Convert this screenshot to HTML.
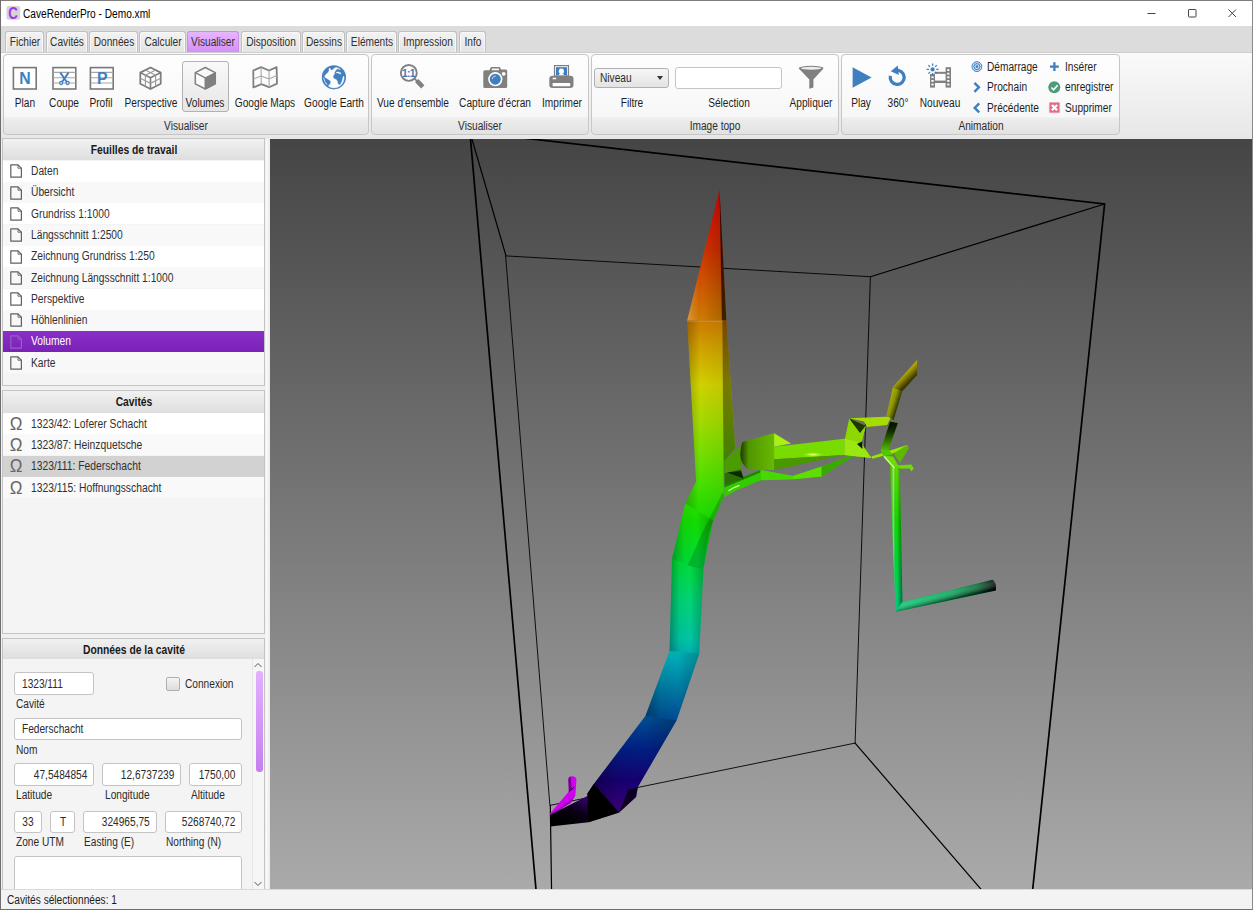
<!DOCTYPE html>
<html lang="fr">
<head>
<meta charset="utf-8">
<title>CaveRenderPro - Demo.xml</title>
<style>
*{box-sizing:border-box;margin:0;padding:0}
html,body{width:1253px;height:910px;overflow:hidden}
body{position:relative;background:#f0f0f0;font-family:"Liberation Sans","DejaVu Sans",sans-serif;font-size:12px;color:#2b2b2b}
.abs{position:absolute}
.t{position:absolute;white-space:nowrap;line-height:14px;height:14px;transform:scaleX(0.845);transform-origin:0 50%}
.t.ct{transform:translateX(-50%) scaleX(0.845);transform-origin:50% 50%}
.t.rt{transform-origin:100% 50%}
#title{left:0;top:0;width:1253px;height:26px;background:#fff;border-top:1px solid #7d7d7d}
#tabbar{left:0;top:26px;width:1253px;height:27px;background:#dcdcdc;border-bottom:1px solid #cecece}
.tab{position:absolute;top:31px;height:21px;border:1px solid #c0c0c0;border-bottom:none;border-radius:3px 3px 0 0;background:linear-gradient(#f3f3f3,#e4e4e4);box-shadow:inset 1px 1px 0 #f8f8f8,inset -1px 0 0 #f8f8f8}
.tab.sel{background:linear-gradient(#e6b6ff,#d490f6);border-color:#c690e4;box-shadow:none}
#ribbon{left:0;top:53px;width:1253px;height:86px;background:linear-gradient(#fafafa,#e7e7e7)}
.grp{position:absolute;top:54px;height:81px;border:1px solid #c6c6c6;border-radius:4px;background:linear-gradient(#fefefe 0,#f7f7f7 62px,#ededed 63px,#e2e2e2 100%)}
.panel{position:absolute;left:2px;width:263px;border:1px solid #c4c4c4;background:#f4f4f4;overflow:hidden}
.phead{position:absolute;left:0;right:0;top:0;height:20px;background:linear-gradient(#f1f1f1,#dedede)}
.row{position:absolute;left:0;width:261px;height:21px}
.inp{position:absolute;border:1px solid #c4c4c4;border-radius:3px;background:#fff}
#view{left:270px;top:139px;width:983px;height:750px;background:linear-gradient(#454545,#aaaaaa);overflow:hidden}
#status{left:0;top:889px;width:1253px;height:21px;background:#f3f3f3;border-top:1px solid #dadada}
#wb{left:0;top:0;width:1253px;height:910px;border-left:1px solid #6e6e6e;border-right:1px solid #8a8a8a;border-bottom:1px solid #6e6e6e;pointer-events:none}
</style>
</head>
<body>
<div id="title" class="abs"></div>
<svg class="abs" style="left:6px;top:6px" width="15" height="14" viewBox="0 0 15 14"><rect x=".5" y="0" width="13.700" height="13.800" rx="2" fill="#d4d4d4"/><text x="7" y="13" text-anchor="middle" font-family="Liberation Sans,sans-serif" font-size="16.500" font-weight="bold" fill="#a333f0" transform="translate(7 0) scale(.8 1) translate(-7 0)">C</text></svg>
<div class="t" style="left:23px;top:7px;color:#000;">CaveRenderPro - Demo.xml</div>
<svg class="abs" style="left:1140px;top:0" width="113" height="26" viewBox="0 0 113 26" fill="none" stroke="#444" stroke-width="1"><path d="M7.500 13.500h8"/><rect x="48.500" y="9.500" width="7.500" height="7.500" rx=".6"/><path d="M88.500 9.500l7.500 7.500M96 9.500l-7.500 7.500"/></svg>
<div id="tabbar" class="abs"></div>
<div class="tab" style="left:5px;width:39px"></div>
<div class="t ct" style="left:24.5px;top:35px;color:#303030;">Fichier</div>
<div class="tab" style="left:46px;width:42px"></div>
<div class="t ct" style="left:67.0px;top:35px;color:#303030;">Cavités</div>
<div class="tab" style="left:89px;width:49px"></div>
<div class="t ct" style="left:113.5px;top:35px;color:#303030;">Données</div>
<div class="tab" style="left:139px;width:47px"></div>
<div class="t ct" style="left:162.5px;top:35px;color:#303030;">Calculer</div>
<div class="tab sel" style="left:187px;width:52px"></div>
<div class="t ct" style="left:213.0px;top:35px;color:#303030;">Visualiser</div>
<div class="tab" style="left:241px;width:60px"></div>
<div class="t ct" style="left:271.0px;top:35px;color:#303030;">Disposition</div>
<div class="tab" style="left:302px;width:43px"></div>
<div class="t ct" style="left:323.5px;top:35px;color:#303030;">Dessins</div>
<div class="tab" style="left:346px;width:51px"></div>
<div class="t ct" style="left:371.5px;top:35px;color:#303030;">Eléments</div>
<div class="tab" style="left:398px;width:59px"></div>
<div class="t ct" style="left:427.5px;top:35px;color:#303030;">Impression</div>
<div class="tab" style="left:459px;width:27px"></div>
<div class="t ct" style="left:472.5px;top:35px;color:#303030;">Info</div>
<div id="ribbon" class="abs"></div>
<div class="grp" style="left:3px;width:366px"></div>
<div class="t ct" style="left:186.0px;top:119px;">Visualiser</div>
<div class="grp" style="left:371px;width:218px"></div>
<div class="t ct" style="left:480.0px;top:119px;">Visualiser</div>
<div class="grp" style="left:591px;width:248px"></div>
<div class="t ct" style="left:715.0px;top:119px;">Image topo</div>
<div class="grp" style="left:841px;width:279px"></div>
<div class="t ct" style="left:980.5px;top:119px;">Animation</div>
<div class="abs" style="left:182px;top:61px;width:47px;height:51px;border:1px solid #b2b2b2;border-radius:3px;background:linear-gradient(#f9f9f9,#e6e6e6)"></div>
<div class="t ct" style="left:24.5px;top:96px;color:#1e1e1e;">Plan</div>
<div class="t ct" style="left:64px;top:96px;color:#1e1e1e;">Coupe</div>
<div class="t ct" style="left:101px;top:96px;color:#1e1e1e;">Profil</div>
<div class="t ct" style="left:150.5px;top:96px;color:#1e1e1e;">Perspective</div>
<div class="t ct" style="left:205px;top:96px;color:#1e1e1e;">Volumes</div>
<div class="t ct" style="left:264.5px;top:96px;color:#1e1e1e;">Google Maps</div>
<div class="t ct" style="left:333.5px;top:96px;color:#1e1e1e;">Google Earth</div>
<div class="t ct" style="left:413px;top:96px;color:#1e1e1e;">Vue d'ensemble</div>
<div class="t ct" style="left:495px;top:96px;color:#1e1e1e;">Capture d'écran</div>
<div class="t ct" style="left:561.5px;top:96px;color:#1e1e1e;">Imprimer</div>
<div class="t ct" style="left:632px;top:96px;color:#1e1e1e;">Filtre</div>
<div class="t ct" style="left:728.5px;top:96px;color:#1e1e1e;">Sélection</div>
<div class="t ct" style="left:811px;top:96px;color:#1e1e1e;">Appliquer</div>
<div class="t ct" style="left:861px;top:96px;color:#1e1e1e;">Play</div>
<div class="t ct" style="left:897.5px;top:96px;color:#1e1e1e;">360°</div>
<div class="t ct" style="left:940px;top:96px;color:#1e1e1e;">Nouveau</div>
<svg class="abs" style="left:0;top:55px" width="1253" height="80" viewBox="0 55 1253 80">
<g font-family="Liberation Sans,sans-serif" font-weight="bold">
<!-- Plan -->
<rect x="13.400" y="67.600" width="22.800" height="21.400" fill="#fff" stroke="#787878" stroke-width="1.600"/>
<text x="24.900" y="84.200" font-size="15.800" text-anchor="middle" fill="#3f7fbf">N</text>
<!-- Coupe -->
<rect x="53" y="67.600" width="22.800" height="21.400" fill="#fff" stroke="#787878" stroke-width="1.600"/>
<path d="M53.500 72.400h22M53.500 77.700h22M53.500 83h22" stroke="#a6a6a6" stroke-width="1.100" fill="none"/>
<g fill="none" stroke="#3f7fbf">
<path d="M60.300 72.600L66.800 82M68.500 72.600L62 82" stroke-width="1.900"/>
<circle cx="61.200" cy="83" r="1.600" stroke-width="1.100"/><circle cx="67.600" cy="83" r="1.600" stroke-width="1.100"/>
</g>
<!-- Profil -->
<rect x="90.400" y="67.600" width="22.800" height="21.400" fill="#fff" stroke="#787878" stroke-width="1.600"/>
<path d="M91 72.400h22M91 77.700h22M91 83h22" stroke="#a6a6a6" stroke-width="1.100" fill="none"/>
<text x="102.300" y="84.200" font-size="15.800" text-anchor="middle" fill="#3f7fbf">P</text>
</g>
<!-- Perspective cube -->
<g fill="none" stroke-linejoin="round">
<path d="M150.500 67.500L160.700 72.600V83.800L150.500 89L140.300 83.800V72.600Z" fill="#fff" stroke="#7c7c7c" stroke-width="1.800"/>
<path d="M140.300 72.600L150.500 77.800L160.700 72.600M150.500 77.800V89" stroke="#7c7c7c" stroke-width="1.600"/>
<path d="M145.400 70L155.600 75.200V86.400M155.600 70L145.400 75.200V86.400M140.300 78.200L150.500 83.400L160.700 78.200" stroke="#9c9c9c" stroke-width="1.200"/>
</g>
<!-- Volumes cube -->
<g fill="none" stroke-linejoin="round">
<path d="M205.300 67.500L215.300 72.600V83.800L205.300 89L195.300 83.800V72.600Z" fill="#fafafa" stroke="#808080" stroke-width="1.500"/>
<path d="M205.300 77.800L215.300 72.600V83.800L205.300 89Z" fill="#808080" stroke="#808080" stroke-width="1"/>
<path d="M195.300 72.600L205.300 77.800V89" stroke="#808080" stroke-width="1.300"/>
</g>
<!-- Google Maps -->
<g fill="none" stroke-linejoin="round">
<path d="M253.300 70.500L261 67.200L269 70.500L276.600 67.200L277 83.600L269.200 87.200L261.300 84.200L253.400 87.400Z" fill="#fcfcfc" stroke="#808080" stroke-width="1.800"/>
<path d="M261 67.200L261.300 84.200M269 70.500L269.200 87.200M253.400 79L261.200 76L269.100 79L276.800 75.600" stroke="#a8a8a8" stroke-width="1.100"/>
</g>
<!-- Google Earth -->
<circle cx="333.900" cy="77.300" r="12.100" fill="#4280bf"/>
<g fill="#fdfdfd" stroke="#fdfdfd" stroke-width=".4" stroke-linejoin="round"><path d="M329.8 68.0 L330.9 70.1 L332.4 70.1 L334.7 68.0 L336.2 67.5 L338.4 68.0 L336.9 69.3 L335.4 70.8 L334.3 72.7 L334.7 73.8 L333.6 74.9 L333.0 76.8 L333.9 78.7 L336.2 79.4 L337.3 81.3 L338.0 83.9 L339.2 85.0 L340.6 84.3 L342.1 80.9 L342.9 77.6 L343.6 76.1 L344.2 77.6 L343.6 80.9 L342.1 83.9 L339.9 86.1 L336.9 87.6 L333.9 88.0 L330.9 87.4 L328.3 86.1 L330.2 83.9 L330.9 81.7 L329.8 80.2 L327.2 78.7 L325.0 77.2 L324.6 76.1 L326.1 74.2 L328.3 72.3 L329.1 70.8 L328.9 69.0Z"/><path d="M323.5 77.6 L324.6 80.9 L326.1 83.9 L327.2 84.6 L325.3 82.4 L324.0 79.4Z"/><path d="M336.2 72.3 L338.4 71.9 L341.0 73.1 L340.6 74.0 L338.0 73.1 L336.4 72.9Z"/><path d="M338.4 68.5 L340.3 69.1 L339.9 69.6 L338.2 69.0Z"/></g>
<!-- Vue d'ensemble magnifier -->
<path d="M414 78.200L417.500 81.600" stroke="#808080" stroke-width="1.800"/>
<path d="M416.700 80.700L422.800 86.900" stroke="#808080" stroke-width="4.600" stroke-linecap="butt"/>
<circle cx="408.800" cy="72.900" r="7.950" fill="#fff" stroke="#808080" stroke-width="1.900"/>
<text x="408.500" y="76.600" font-family="Liberation Sans,sans-serif" font-weight="bold" font-size="10.300" text-anchor="middle" fill="#3c78b8" letter-spacing="-.7">1:1</text>
<!-- Capture d'écran camera -->
<path d="M484.800 70.200h4.600l1-2.200a1.500 1.500 0 0 1 1.300-.9h7.400a1.500 1.500 0 0 1 1.300.9l.6 1.500h4.600a1.600 1.600 0 0 1 1.600 1.600v15.300a1.500 1.500 0 0 1-1.500 1.500h-20.900a1.500 1.500 0 0 1-1.500-1.500v-14.700a1.500 1.500 0 0 1 1.500-1.500z" fill="#808080"/>
<rect x="491.800" y="68.400" width="7.200" height="1.900" rx=".4" fill="#f4f4f4"/>
<circle cx="495.300" cy="79.200" r="7.100" fill="#fff"/>
<circle cx="495.300" cy="79.200" r="5.500" fill="#3f7fbf"/>
<path d="M492.200 78.700A3.500 3.500 0 0 1 495.400 75.900" fill="none" stroke="#c4dcf4" stroke-width="1" stroke-linecap="round"/>
<circle cx="503.700" cy="73.800" r="1.900" fill="#fff"/>
<!-- Imprimer printer -->
<rect x="554.500" y="65.600" width="14" height="10.400" fill="#f4f4f4" stroke="#808080" stroke-width="1.200"/>
<rect x="556" y="67.200" width="11" height="8" fill="#3f7fbf"/>
<circle cx="561.400" cy="71.200" r="2.600" fill="#fff"/><path d="M558.800 75.200c.4-1.600 1.400-2 2.600-2s2.200.4 2.600 2z" fill="#fff"/>
<path d="M552.600 75.800h17.600a3.300 3.300 0 0 1 3.300 3.300v5.600a3.200 3.200 0 0 1-3.200 3.200h-17.800a3.200 3.200 0 0 1-3.200-3.200v-5.600a3.300 3.300 0 0 1 3.300-3.300z" fill="#808080"/>
<rect x="552.600" y="82.900" width="17.600" height="3.400" rx=".5" fill="#fff"/>
<rect x="552.600" y="77.700" width="3.600" height="1.500" rx=".4" fill="#fff"/>
<!-- Appliquer funnel -->
<path d="M798.800 68.500L809.300 79.600V88.800L813.400 87.400V79.600L823.400 68.500Z" fill="#808080"/>
<ellipse cx="811.100" cy="68.300" rx="12.300" ry="2.500" fill="#808080"/>
<ellipse cx="811.100" cy="68.200" rx="10.300" ry="1.500" fill="#ececec"/>
<!-- Play -->
<path d="M852.600 67.200L871.600 77.400L852.600 87.800Z" fill="#3f7fbf"/>
<!-- 360 -->
<path d="M895.600 70.600A7 7 0 1 1 890.400 75.800" fill="none" stroke="#3f7fbf" stroke-width="3.300"/>
<path d="M897.800 65.400L890.800 71.200L898.800 75Z" fill="#3f7fbf"/>
<!-- Nouveau film -->
<g fill="#808080">
<rect x="930" y="74" width="5" height="13.600"/><rect x="945.600" y="67.200" width="5.400" height="20.400"/>
<rect x="934.500" y="71.800" width="11.500" height="2"/>
<rect x="934.500" y="80.600" width="11.500" height="2.400"/>
</g>
<g fill="#fff"><rect x="931.400" y="76.400" width="2.200" height="1.800"/><rect x="931.400" y="80" width="2.200" height="1.800"/><rect x="931.400" y="83.600" width="2.200" height="1.800"/><rect x="947.200" y="69.200" width="2.200" height="1.800"/><rect x="947.200" y="72.800" width="2.200" height="1.800"/><rect x="947.200" y="76.400" width="2.200" height="1.800"/><rect x="947.200" y="80" width="2.200" height="1.800"/><rect x="947.200" y="83.600" width="2.200" height="1.800"/></g>
<g stroke="#3f7fbf" stroke-width="1.300" fill="none" stroke-dasharray="2.400 1.800 0 0"><path d="M932.600 63.400v4.200M932.600 75.400v-4.200M926.600 69.400h4.200M938.600 69.400h-4.200M928.400 65.200l3 3M936.800 73.600l-3-3M936.800 65.200l-3 3M928.400 73.600l3-3"/></g>
<circle cx="932.600" cy="69.400" r="2.100" fill="#3f7fbf"/>
<!-- small icons col 1 -->
<g fill="none" stroke="#3f7fbf">
<circle cx="976.900" cy="66.600" r="4.900" stroke-width="1" fill="#cfe0f2"/><circle cx="976.900" cy="66.600" r="3" stroke-width="1"/><circle cx="976.900" cy="66.600" r="1.400" fill="#3f7fbf" stroke="none"/>
<path d="M974.400 82.800L978.900 87.300L974.400 91.800" stroke-width="2.400"/>
<path d="M979.200 103.400L974.700 107.900L979.200 112.400" stroke-width="2.400"/>
<path d="M1054.400 62.300v8.800M1050 66.700h8.800" stroke-width="2.300"/>
</g>
<circle cx="1054.300" cy="87.300" r="6" fill="#4c9c7c"/>
<path d="M1051.400 87.500L1053.600 89.800L1057.600 85.200" fill="none" stroke="#fff" stroke-width="1.600"/>
<rect x="1049.400" y="102.500" width="10.200" height="10.200" rx="1" fill="#e06a88" stroke="#eaa0b4" stroke-width=".8"/>
<path d="M1051.900 105L1057.100 110.200M1057.100 105L1051.900 110.200" stroke="#fff" stroke-width="2.300" fill="none"/>
</svg>

<div class="abs" style="left:594px;top:68px;width:75px;height:20px;border:1px solid #b0b0b0;border-radius:3px;background:linear-gradient(#f7f7f7,#e3e3e3)"></div>
<div class="t" style="left:600px;top:71px;">Niveau</div>
<div class="abs" style="left:657px;top:76px;width:0;height:0;border-left:3.5px solid transparent;border-right:3.5px solid transparent;border-top:4px solid #333"></div>
<div class="abs" style="left:675px;top:67px;width:107px;height:22px;border:1px solid #c6c6c6;border-radius:3px;background:#fff"></div>
<div class="t" style="left:987px;top:60px;color:#1e1e1e;">Démarrage</div>
<div class="t" style="left:1065px;top:60px;color:#1e1e1e;">Insérer</div>
<div class="t" style="left:987px;top:80px;color:#1e1e1e;">Prochain</div>
<div class="t" style="left:1065px;top:80px;color:#1e1e1e;">enregistrer</div>
<div class="t" style="left:987px;top:101px;color:#1e1e1e;">Précédente</div>
<div class="t" style="left:1065px;top:101px;color:#1e1e1e;">Supprimer</div>
<div class="panel" style="top:138px;height:248px"><div class="phead" style="height:21px"></div></div>
<div class="t ct" style="left:133.5px;top:143px;color:#1a1a1a;font-weight:bold;transform:translateX(-50%) scaleX(0.86);">Feuilles de travail</div>
<div class="row" style="left:3px;top:160.7px;background:#fff"></div>
<svg class="abs" style="left:10px;top:164.3px" width="12" height="14" viewBox="0 0 12 14" fill="none" stroke="#606060" stroke-width="1.200" stroke-linejoin="round"><path d="M.800 .800h7.200l3.400 3.400v9h-10.600z"/><path d="M8 .800v3.400h3.400" stroke-width=".9"/></svg>
<div class="t" style="left:31px;top:164.0px;color:#303030;transform:scaleX(0.854);">Daten</div>
<div class="row" style="left:3px;top:182.0px;background:#f8f8f8"></div>
<svg class="abs" style="left:10px;top:185.6px" width="12" height="14" viewBox="0 0 12 14" fill="none" stroke="#606060" stroke-width="1.200" stroke-linejoin="round"><path d="M.800 .800h7.200l3.400 3.400v9h-10.600z"/><path d="M8 .800v3.400h3.400" stroke-width=".9"/></svg>
<div class="t" style="left:31px;top:185.3px;color:#303030;transform:scaleX(0.854);">Übersicht</div>
<div class="row" style="left:3px;top:203.3px;background:#fff"></div>
<svg class="abs" style="left:10px;top:206.9px" width="12" height="14" viewBox="0 0 12 14" fill="none" stroke="#606060" stroke-width="1.200" stroke-linejoin="round"><path d="M.800 .800h7.200l3.400 3.400v9h-10.600z"/><path d="M8 .800v3.400h3.400" stroke-width=".9"/></svg>
<div class="t" style="left:31px;top:206.6px;color:#303030;transform:scaleX(0.854);">Grundriss 1:1000</div>
<div class="row" style="left:3px;top:224.6px;background:#f8f8f8"></div>
<svg class="abs" style="left:10px;top:228.2px" width="12" height="14" viewBox="0 0 12 14" fill="none" stroke="#606060" stroke-width="1.200" stroke-linejoin="round"><path d="M.800 .800h7.200l3.400 3.400v9h-10.600z"/><path d="M8 .800v3.400h3.400" stroke-width=".9"/></svg>
<div class="t" style="left:31px;top:227.9px;color:#303030;transform:scaleX(0.854);">Längsschnitt 1:2500</div>
<div class="row" style="left:3px;top:245.9px;background:#fff"></div>
<svg class="abs" style="left:10px;top:249.5px" width="12" height="14" viewBox="0 0 12 14" fill="none" stroke="#606060" stroke-width="1.200" stroke-linejoin="round"><path d="M.800 .800h7.200l3.400 3.400v9h-10.600z"/><path d="M8 .800v3.400h3.400" stroke-width=".9"/></svg>
<div class="t" style="left:31px;top:249.2px;color:#303030;transform:scaleX(0.854);">Zeichnung Grundriss 1:250</div>
<div class="row" style="left:3px;top:267.2px;background:#f8f8f8"></div>
<svg class="abs" style="left:10px;top:270.8px" width="12" height="14" viewBox="0 0 12 14" fill="none" stroke="#606060" stroke-width="1.200" stroke-linejoin="round"><path d="M.800 .800h7.200l3.400 3.400v9h-10.600z"/><path d="M8 .800v3.400h3.400" stroke-width=".9"/></svg>
<div class="t" style="left:31px;top:270.5px;color:#303030;transform:scaleX(0.854);">Zeichnung Längsschnitt 1:1000</div>
<div class="row" style="left:3px;top:288.5px;background:#fff"></div>
<svg class="abs" style="left:10px;top:292.1px" width="12" height="14" viewBox="0 0 12 14" fill="none" stroke="#606060" stroke-width="1.200" stroke-linejoin="round"><path d="M.800 .800h7.200l3.400 3.400v9h-10.600z"/><path d="M8 .800v3.400h3.400" stroke-width=".9"/></svg>
<div class="t" style="left:31px;top:291.8px;color:#303030;transform:scaleX(0.854);">Perspektive</div>
<div class="row" style="left:3px;top:309.8px;background:#f8f8f8"></div>
<svg class="abs" style="left:10px;top:313.4px" width="12" height="14" viewBox="0 0 12 14" fill="none" stroke="#606060" stroke-width="1.200" stroke-linejoin="round"><path d="M.800 .800h7.200l3.400 3.400v9h-10.600z"/><path d="M8 .800v3.400h3.400" stroke-width=".9"/></svg>
<div class="t" style="left:31px;top:313.1px;color:#303030;transform:scaleX(0.854);">Höhlenlinien</div>
<div class="row" style="left:3px;top:331.1px;background:linear-gradient(#8a2fc8,#7a22b8)"></div>
<svg class="abs" style="left:10px;top:334.7px" width="12" height="14" viewBox="0 0 12 14" fill="none" stroke="#9460bc" stroke-width="1.200" stroke-linejoin="round"><path d="M.800 .800h7.200l3.400 3.400v9h-10.600z"/><path d="M8 .800v3.400h3.400" stroke-width=".9"/></svg>
<div class="t" style="left:31px;top:334.4px;color:#fff;transform:scaleX(0.854);">Volumen</div>
<div class="row" style="left:3px;top:352.4px;background:#f8f8f8"></div>
<svg class="abs" style="left:10px;top:356.0px" width="12" height="14" viewBox="0 0 12 14" fill="none" stroke="#606060" stroke-width="1.200" stroke-linejoin="round"><path d="M.800 .800h7.200l3.400 3.400v9h-10.600z"/><path d="M8 .800v3.400h3.400" stroke-width=".9"/></svg>
<div class="t" style="left:31px;top:355.7px;color:#303030;transform:scaleX(0.854);">Karte</div>
<div class="panel" style="top:390px;height:244px"><div class="phead" style="height:22px"></div></div>
<div class="t ct" style="left:133.5px;top:395px;color:#1a1a1a;font-weight:bold;transform:translateX(-50%) scaleX(0.86);">Cavités</div>
<div class="row" style="left:3px;top:413px;background:#fff"></div>
<div class="t ct" style="left:16.400px;top:413.8px;font-size:17.500px;line-height:20px;height:20px;color:#666;transform:translateX(-50%) scaleX(.97)">Ω</div>
<div class="t" style="left:31px;top:416.8px;color:#303030;transform:scaleX(0.86);">1323/42: Loferer Schacht</div>
<div class="row" style="left:3px;top:434.3px;background:#f9f9f9"></div>
<div class="t ct" style="left:16.400px;top:435.1px;font-size:17.500px;line-height:20px;height:20px;color:#666;transform:translateX(-50%) scaleX(.97)">Ω</div>
<div class="t" style="left:31px;top:438.1px;color:#303030;transform:scaleX(0.86);">1323/87: Heinzquetsche</div>
<div class="row" style="left:3px;top:455.6px;background:#d2d2d2"></div>
<div class="t ct" style="left:16.400px;top:456.4px;font-size:17.500px;line-height:20px;height:20px;color:#666;transform:translateX(-50%) scaleX(.97)">Ω</div>
<div class="t" style="left:31px;top:459.40000000000003px;color:#303030;transform:scaleX(0.86);">1323/111: Federschacht</div>
<div class="row" style="left:3px;top:476.90000000000003px;background:#f9f9f9"></div>
<div class="t ct" style="left:16.400px;top:477.7px;font-size:17.500px;line-height:20px;height:20px;color:#666;transform:translateX(-50%) scaleX(.97)">Ω</div>
<div class="t" style="left:31px;top:480.70000000000005px;color:#303030;transform:scaleX(0.86);">1323/115: Hoffnungsschacht</div>
<div class="panel" style="top:638px;height:252px"><div class="phead" style="height:20px"></div></div>
<div class="t ct" style="left:133.5px;top:643px;color:#1a1a1a;font-weight:bold;transform:translateX(-50%) scaleX(0.86);">Données de la cavité</div>
<div class="inp" style="left:14px;top:672px;width:80px;height:23px"></div>
<div class="t" style="left:22px;top:676.5px;">1323/111</div>
<div class="abs" style="left:166px;top:677px;width:14px;height:14px;border:1px solid #b0b0b0;border-radius:2px;background:linear-gradient(#f4f4f4,#dcdcdc)"></div>
<div class="t" style="left:185px;top:677px;">Connexion</div>
<div class="t" style="left:16px;top:697px;">Cavité</div>
<div class="inp" style="left:14px;top:718px;width:228px;height:22px"></div>
<div class="t" style="left:22px;top:722.0px;">Federschacht</div>
<div class="t" style="left:16px;top:743px;">Nom</div>
<div class="inp" style="left:14px;top:763px;width:80px;height:23px"></div>
<div class="t rt" style="right:1166px;top:767.5px;">47,5484854</div>
<div class="inp" style="left:102px;top:763px;width:79px;height:23px"></div>
<div class="t rt" style="right:1079px;top:767.5px;">12,6737239</div>
<div class="inp" style="left:189px;top:763px;width:53px;height:23px"></div>
<div class="t rt" style="right:1018px;top:767.5px;">1750,00</div>
<div class="t" style="left:16px;top:788px;">Latitude</div>
<div class="t" style="left:104.5px;top:788px;">Longitude</div>
<div class="t" style="left:191px;top:788px;">Altitude</div>
<div class="inp" style="left:14px;top:811px;width:28px;height:22px"></div>
<div class="t ct" style="left:28.0px;top:815.0px;">33</div>
<div class="inp" style="left:50px;top:811px;width:25px;height:22px"></div>
<div class="t ct" style="left:62.5px;top:815.0px;">T</div>
<div class="inp" style="left:83px;top:811px;width:74px;height:22px"></div>
<div class="t rt" style="right:1103px;top:815.0px;">324965,75</div>
<div class="inp" style="left:165px;top:811px;width:77px;height:22px"></div>
<div class="t rt" style="right:1018px;top:815.0px;">5268740,72</div>
<div class="t" style="left:16px;top:835px;">Zone UTM</div>
<div class="t" style="left:84px;top:835px;">Easting (E)</div>
<div class="t" style="left:166px;top:835px;">Northing (N)</div>
<div class="inp" style="left:14px;top:856px;width:228px;height:40px"></div>
<div class="abs" style="left:252px;top:659px;width:12px;height:230px;background:#f6f6f6;border-left:1px solid #e6e6e6"></div>
<svg class="abs" style="left:252px;top:660px" width="12" height="229" viewBox="0 0 12 229" fill="none" stroke="#555" stroke-width="1"><path d="M2.500 7l3.500-3.500L9.500 7"/><path d="M2.500 222l3.500 3.500L9.500 222"/></svg>
<div class="abs" style="left:255.5px;top:671px;width:7px;height:101px;border-radius:3px;background:linear-gradient(#e2b0ff,#c77ff0)"></div>
<div class="abs" style="left:266px;top:139px;width:4px;height:750px;background:linear-gradient(90deg,#fcfcfc,#eaeaea)"></div>
<div id="view" class="abs"><svg class="abs" style="left:0;top:0" width="983" height="751" viewBox="270 139 983 751">
<defs>
<linearGradient id="hg" gradientUnits="userSpaceOnUse" x1="0" y1="190" x2="0" y2="830">
<stop offset="0" stop-color="#d80606"/>
<stop offset=".094" stop-color="#cf3000"/>
<stop offset=".203" stop-color="#cc7a00"/>
<stop offset=".25" stop-color="#d0a400"/>
<stop offset=".305" stop-color="#d0d200"/>
<stop offset=".36" stop-color="#a4da00"/>
<stop offset=".406" stop-color="#7ade00"/>
<stop offset=".453" stop-color="#4ee000"/>
<stop offset=".516" stop-color="#14dc00"/>
<stop offset=".578" stop-color="#00dc34"/>
<stop offset=".64" stop-color="#00d474"/>
<stop offset=".703" stop-color="#00c4a4"/>
<stop offset=".734" stop-color="#00a8b6"/>
<stop offset=".781" stop-color="#0078a2"/>
<stop offset=".828" stop-color="#004a92"/>
<stop offset=".875" stop-color="#001e82"/>
<stop offset=".922" stop-color="#160070"/>
<stop offset=".969" stop-color="#3c007c"/>
<stop offset="1" stop-color="#3c007c"/>
</linearGradient>
<linearGradient id="tubeH" x1="0" y1="0" x2="1" y2="0">
<stop offset="0" stop-color="#000" stop-opacity=".3"/>
<stop offset=".28" stop-color="#000" stop-opacity=".05"/>
<stop offset=".6" stop-color="#000" stop-opacity="0"/>
<stop offset="1" stop-color="#000" stop-opacity=".22"/>
</linearGradient>
<linearGradient id="colH" x1="0" y1="0" x2="1" y2="0">
<stop offset="0" stop-color="#000" stop-opacity=".22"/>
<stop offset=".35" stop-color="#000" stop-opacity="0"/>
<stop offset="1" stop-color="#000" stop-opacity=".06"/>
</linearGradient>
<linearGradient id="vtube" x1="0" y1="0" x2="1" y2="0">
<stop offset="0" stop-color="#000" stop-opacity=".25"/>
<stop offset=".3" stop-color="#fff" stop-opacity=".35"/>
<stop offset=".55" stop-color="#000" stop-opacity="0"/>
<stop offset="1" stop-color="#000" stop-opacity=".5"/>
</linearGradient>
<linearGradient id="htube" gradientUnits="userSpaceOnUse" x1="898" y1="606" x2="996" y2="585">
<stop offset="0" stop-color="#00d070"/>
<stop offset=".55" stop-color="#00aa58"/>
<stop offset=".82" stop-color="#006a34"/>
<stop offset=".95" stop-color="#00200e"/>
<stop offset="1" stop-color="#000"/>
</linearGradient>
<linearGradient id="htubeS" gradientUnits="userSpaceOnUse" x1="946" y1="588" x2="949" y2="600">
<stop offset="0" stop-color="#000" stop-opacity=".1"/>
<stop offset=".35" stop-color="#fff" stop-opacity=".12"/>
<stop offset="1" stop-color="#000" stop-opacity=".55"/>
</linearGradient>
<linearGradient id="blk" gradientUnits="userSpaceOnUse" x1="585" y1="796" x2="572" y2="826">
<stop offset="0" stop-color="#3a0078"/>
<stop offset=".5" stop-color="#0c0018"/>
<stop offset="1" stop-color="#000"/>
</linearGradient>
<linearGradient id="mag" x1="0" y1="0" x2="1" y2="1">
<stop offset="0" stop-color="#9a00b8"/>
<stop offset=".5" stop-color="#d400f4"/>
<stop offset="1" stop-color="#c000e0"/>
</linearGradient>
<linearGradient id="barrel" x1="0" y1="0" x2="1" y2="0">
<stop offset="0" stop-color="#000" stop-opacity=".75"/>
<stop offset=".25" stop-color="#000" stop-opacity=".3"/>
<stop offset="1" stop-color="#000" stop-opacity=".12"/>
</linearGradient>
<linearGradient id="darkv" x1="0" y1="0" x2="0" y2="1">
<stop offset="0" stop-color="#000" stop-opacity=".95"/>
<stop offset=".35" stop-color="#000" stop-opacity=".8"/>
<stop offset="1" stop-color="#000" stop-opacity=".15"/>
</linearGradient>
<radialGradient id="spec"><stop offset="0" stop-color="#f4ff70" stop-opacity="1"/><stop offset=".45" stop-color="#c8ff30" stop-opacity=".6"/><stop offset="1" stop-color="#a0f000" stop-opacity="0"/></radialGradient>
<linearGradient id="spkH" x1="0" y1="0" x2="1" y2="0">
<stop offset="0" stop-color="#fff" stop-opacity=".22"/>
<stop offset=".35" stop-color="#fff" stop-opacity="0"/>
<stop offset=".6" stop-color="#000" stop-opacity=".04"/>
<stop offset="1" stop-color="#000" stop-opacity=".16"/>
</linearGradient>
<linearGradient id="ya1" gradientUnits="userSpaceOnUse" x1="901" y1="371" x2="910.500" y2="380.500">
<stop offset="0" stop-color="#c4bc00"/><stop offset=".4" stop-color="#a8a000"/><stop offset="1" stop-color="#3c3800"/>
</linearGradient>
<linearGradient id="ya2" gradientUnits="userSpaceOnUse" x1="888.500" y1="401" x2="899" y2="404.500">
<stop offset="0" stop-color="#a6b000"/><stop offset=".45" stop-color="#8c9400"/><stop offset="1" stop-color="#262a00"/>
</linearGradient>
</defs>
<!-- bounding box -->
<g fill="none" stroke="#000" stroke-linecap="round">
<path d="M506 255.900L870.400 276.700L855.100 743.100L550.300 805.300Z" stroke-width=".9"/>
<path d="M469.900 132L506 255.900M1104.600 204L870.400 276.700M550.300 805.300L551.600 892M855.100 743.100L983.400 892" stroke-width="1.200"/>
<path d="M469.900 132L536.200 892M469.900 132L1104.600 204L1032.400 892" stroke-width="1.700"/>
</g>
<!-- cave -->
<g id="cave">
<!-- magenta stub -->
<path d="M568.300 779.500Q568.400 776.300 572.300 776.200Q576.400 776.400 576.400 780L575.900 787.800L575.400 795.400L570.700 803.100L549.800 816L549.800 813.700L568.800 791.600Z" fill="url(#mag)"/>
<path d="M568.300 779.500Q568.400 777 570.500 776.500L571.800 789.300L568.800 791.600Z" fill="#30004a" opacity=".55"/>
<path d="M568.800 791.700L574.200 787.200" stroke="#1a0028" stroke-width=".9" fill="none"/>
<path d="M549.800 816L570.700 803.100L575.400 795.400L572.500 798.500L549.800 814.800Z" fill="#500070" opacity=".35"/>
<!-- lower left piece -->
<path d="M589.500 795L550.200 814.700L550.200 826.600L588.400 822.200L619.100 812.500L600 790Z" fill="url(#blk)"/>
<!-- main tube -->
<path id="mt" d="M696.100 481.800L685.300 503.500L672 559.100L669.500 650.900L645.500 715.800L593.800 784L587.300 793.800L589 800L619.100 812.500L636 797.100L637.800 787.300L676.700 720.200L698.700 655.400L699.300 653.400L703.400 568.800L713.100 520.400L723.900 496.300L723.600 481Z" fill="url(#hg)"/>
<path d="M696.100 481.800L685.300 503.500L713.100 520.400L723.900 496.300L723.600 481Z" fill="url(#colH)"/>
<path d="M685.300 503.500L672 559.100L703.400 568.800L713.100 520.400Z" fill="url(#tubeH)"/>
<path d="M672 559.100L669.500 650.900L699.300 653.400L703.400 568.800Z" fill="url(#tubeH)"/>
<path d="M669.500 650.900L645.500 715.800L676.700 720.200L699.300 653.400Z" fill="url(#tubeH)"/>
<path d="M645.500 715.800L593.800 784L619.100 812.500L636 797.100L637.800 787.300L676.700 720.200Z" fill="url(#tubeH)"/>
<path d="M723.300 491L724 496.300L713.100 520.400L708.800 534L703.400 568.800L687.700 565.500L703.500 530Z" fill="#000" opacity=".17"/>
<path d="M593.800 784L587.300 793.800L588.400 822.200L619.100 812.500Z" fill="#000"/>
<path d="M637.800 787.300L636 797.100L619.100 812.500L628 790Z" fill="#000" opacity=".7"/>
<!-- spike -->
<path d="M719.500 189.700L687.100 320.700L722 320.700Z" fill="url(#hg)"/>
<path d="M719.500 189.700L687.100 320.700L722 320.700Z" fill="url(#spkH)"/>
<path d="M719.500 189.700L721.900 320.700L726.400 320.700Z" fill="url(#hg)"/>
<path d="M719.500 189.700L721.900 320.700L726.400 320.700Z" fill="#000" opacity=".72"/>
<!-- column -->
<path d="M722.200 320.500L726.400 320.500L735.200 448L724.600 461L723.800 494Z" fill="url(#hg)"/>
<path d="M722.200 320.500L726.400 320.500L735.200 448L724.600 461L723.800 494Z" fill="#000" opacity=".42"/>
<path d="M687.200 320.500L722.300 320.500L723.700 493.600L696.100 481.800Z" fill="url(#hg)"/>
<path d="M687.200 320.500L722.300 320.500L723.700 493.600L696.100 481.800Z" fill="url(#colH)"/>
<path d="M687.200 320.500L722.300 320.500L722.300 322L687.300 322Z" fill="#fff" opacity=".12"/>
<!-- lower tube going right from column -->
<path d="M724.600 484.100L760.600 469.900L793.100 476L821.600 466.500L851.500 455L853 456.500L821.600 476.500L793.100 479.200L760.600 480.200L734.800 490.900L724.600 497Z" fill="#3ed000"/>
<path d="M724.600 484.100L760.600 469.900L760.600 472.600L724.600 487.500Z" fill="#1f8400"/>
<path d="M760.600 469.900L793.100 476L793.100 479.200L760.600 480.200Z" fill="#46d800"/>
<path d="M793.100 476L821.600 466.500L821.600 476.500L793.100 479.200Z" fill="#5ce000"/>
<path d="M821.600 466.500L851.500 455L853 456.500L821.600 476.500Z" fill="#3aa800"/>
<path d="M724.600 487.500L734.800 484L760.600 472.600L760.600 480.200L734.800 490.900L724.600 497Z" fill="#34cc00"/>
<path d="M729 490.500Q734 487 739 485.600" stroke="#d8ffa0" stroke-width="1.400" fill="none" opacity=".9" stroke-linecap="round"/>
<!-- small connector between column and barrel -->
<path d="M724.600 460.400L740.900 446.100L740.900 469.200L724.600 473.300Z" fill="#4a9c00"/>
<path d="M724.600 473.300L740.900 469.200L744 479L724.600 484.500Z" fill="#2a7000"/>
<path d="M727 472.500L741 471L743.500 478.500Z" fill="#0c2800"/>
<!-- barrel -->
<path d="M742.300 442.100L774.100 433.200L774.100 469.900L748 469.500Q739 462 740.400 452Q741 445 742.300 442.100Z" fill="#74d400"/>
<path d="M742.300 442.100L774.100 433.200L774.100 469.900L748 469.500Q739 462 740.400 452Q741 445 742.300 442.100Z" fill="url(#barrel)"/>
<path d="M774.100 433.200L791.100 443.400L774.100 446.800Z" fill="#a8f018"/>
<!-- horizontal tube -->
<path d="M774.100 446.800L844.700 438.700L844.200 455L774.100 459.200Z" fill="#78dc00"/>
<path d="M774.100 459.200L844.200 455L832.500 457.500L774.100 469.900Z" fill="#4a9800"/>
<ellipse cx="813" cy="454.600" rx="11" ry="2.600" fill="url(#spec)"/>
<!-- right junction -->
<path d="M844.700 438.700L860 432.800L866 425.500L861.400 443L871.400 457.900L845 455Z" fill="#86e000"/>
<path d="M844.700 438.700L858 441L871.400 457.900L844.200 455Z" fill="#9ae810"/>
<path d="M849.300 418.300L865.700 425.700L861.400 442.900L845 438.600Z" fill="#8cd800"/>
<path d="M849.300 418.300L865.700 425.700L860 433L851 421Z" fill="#1e3800"/>
<path d="M857 444L862 441.500L862.500 449Z" fill="#0a1400"/>
<path d="M849.300 418.300L891.400 416.400L887.100 425L867.100 427.100L864 421.500Z" fill="#a6dc00"/>
<!-- dark vertical piece -->
<path d="M890 421.400L897.900 422.900L888.600 450L880.700 450Z" fill="#60d800"/>
<path d="M890 421.400L897.900 422.900L888.600 450L880.700 450Z" fill="url(#darkv)"/>
<!-- yellow arm -->
<path d="M892.900 387.100L902.100 391.400L893.600 420L886.400 415.700Z" fill="url(#ya2)"/>
<path d="M892.900 387.100L917.100 359.700L917.100 375L902.100 391.400Z" fill="url(#ya1)"/>
<!-- lower junction -->
<path d="M871.400 456.400L907.100 445L908.600 448.500L894.300 453L882.900 456L872.200 458.800Z" fill="#96e800"/>
<path d="M894.300 453L907.100 445L908.600 448.500L900 462.900L895 455.700Z" fill="#5cb800"/>
<path d="M880.700 450L888.600 450L893 455L882.900 455.700Z" fill="#50c800"/>
<!-- small side branch -->
<path d="M895.700 465.400L911.400 464.600L913.800 468.600L911.400 471.600L909.500 468.600L895.700 468.800Z" fill="#70dc00"/>
<!-- vertical thin tube -->
<path d="M882.900 455.700L893 456.500L899.800 468L902.500 602.300L897 611.400L895.600 611.200L889.700 464Z" fill="url(#hg)"/>
<path d="M889.700 464L899.800 468L902.500 602.300L895.600 611.200Z" fill="url(#vtube)"/>
<path d="M884 456.500L894.500 468" stroke="#e8ffc0" stroke-width="1.300" opacity=".85"/>
<!-- horizontal thin tube -->
<path d="M895.800 611.400L902.300 602.300L992.500 579.700Q997 583 995.800 590.600L897.200 611.600Z" fill="url(#htube)"/>
<path d="M895.800 611.400L902.300 602.300L992.500 579.700Q997 583 995.800 590.600L897.200 611.600Z" fill="url(#htubeS)"/>
</g>
</svg>
</div>
<div id="status" class="abs"></div>
<div class="t" style="left:6.5px;top:893px;color:#1a1a1a;">Cavités sélectionnées: 1</div>
<div id="wb" class="abs"></div>
</body>
</html>
